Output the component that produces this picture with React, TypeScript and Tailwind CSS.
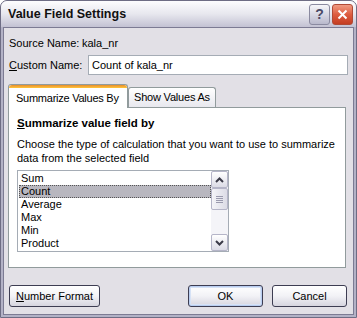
import React from "react";

const ui = { fontFamily: '"Liberation Sans", Arial, sans-serif' };

function XpButton({
  children,
  className = "",
  isDefault = false,
}: {
  children: React.ReactNode;
  className?: string;
  isDefault?: boolean;
}) {
  return (
    <button
      className={`flex h-[22px] items-center justify-center rounded-[3px] border border-[#3d3d52] bg-gradient-to-b from-[#ffffff] via-[#f2f2f6] to-[#d6d5df] text-[11px] text-black ${
        isDefault ? "shadow-[inset_0_0_0_1px_#b9cdf0,inset_0_0_0_2px_#d6e2f6]" : ""
      } ${className}`}
    >
      {children}
    </button>
  );
}

function ScrollBtn({ dir }: { dir: "up" | "down" }) {
  return (
    <div className="flex h-[17px] w-[17px] items-center justify-center rounded-[2px] border border-[#b5b5c8] bg-gradient-to-b from-[#ffffff] to-[#dcdce6]">
      <svg width="9" height="6" viewBox="0 0 9 6">
        <path
          d={dir === "up" ? "M1 5 L4.5 1.5 L8 5" : "M1 1 L4.5 4.5 L8 1"}
          fill="none"
          stroke="#3b3b48"
          strokeWidth="2"
        />
      </svg>
    </div>
  );
}

export default function App() {
  const items = ["Sum", "Count", "Average", "Max", "Min", "Product"];

  return (
    <div className="h-[318px] w-[357px] overflow-hidden bg-white" style={ui}>
      <div className="flex h-full flex-col rounded-t-[7px] border border-[#6e6d84] bg-[#b3b2c6]">
        {/* Title bar */}
        <div className="flex h-[26px] shrink-0 items-center rounded-t-[6px] bg-gradient-to-b from-[#fdfdfe] via-[#e7e7ee] to-[#c3c2d3] pl-[7px] pr-[3px]">
          <span className="flex-1 text-[12.5px] font-bold text-[#111]">
            Value Field Settings
          </span>
          <div className="flex h-[21px] w-[21px] items-center justify-center rounded-[3px] border border-[#8a8aa0] bg-gradient-to-b from-[#f6f6fa] to-[#b9b9cc] text-[14px] font-bold text-[#4a4a66]">
            ?
          </div>
          <div className="ml-[2px] flex h-[21px] w-[21px] items-center justify-center rounded-[3px] border border-[#b04a36] bg-gradient-to-b from-[#ef9a82] via-[#dd5c3f] to-[#c43d22]">
            <svg width="11" height="11" viewBox="0 0 11 11">
              <path d="M1.5 1.5 L9.5 9.5 M9.5 1.5 L1.5 9.5" stroke="#fff" strokeWidth="2" />
            </svg>
          </div>
        </div>

        {/* Body */}
        <div className="mx-[2px] mb-[2px] flex flex-1 flex-col border border-[#7c7b93] bg-[#e2e0e6] text-[11px] text-black">
          <div className="mt-[9px] flex h-[13px] items-center pl-[5px]">
            <span className="w-[73px]">Source Name:</span>
            <span>kala_nr</span>
          </div>

          <div className="mt-[5px] flex items-center pl-[5px] pr-[5px]">
            <span className="w-[79px]">
              <u>C</u>ustom Name:
            </span>
            <div className="flex h-[20px] flex-1 items-center border border-[#a5acb5] bg-white pl-[3px]">
              Count of kala_nr
            </div>
          </div>

          {/* Tabs */}
          <div className="mt-[9px] flex items-end pl-[4px]">
            <div className="relative z-10 -mb-px flex h-[24px] w-[120px] flex-col rounded-t-[3px] border border-b-0 border-[#919b9c] bg-white">
              <div className="h-[3px] rounded-t-[3px] bg-gradient-to-b from-[#e68b2c] to-[#ffc73c]" />
              <div className="flex flex-1 items-center pl-[7px] tracking-[-0.25px]">Summarize Values By</div>
            </div>
            <div className="flex h-[20px] w-[88px] items-center rounded-t-[3px] border border-b-0 border-[#919b9c] bg-gradient-to-b from-[#ffffff] to-[#e8e8ee] pl-[5px] tracking-[-0.2px]">
              Show Values As
            </div>
          </div>

          <div className="ml-[4px] mr-[7px] flex h-[161px] flex-col border border-[#919b9c] bg-white pl-[8px]">
            <div className="mt-[7px] text-[11.5px] font-bold">
              <u>S</u>ummarize value field by
            </div>
            <div className="mt-[5px] leading-[14px]">
              Choose the type of calculation that you want to use to summarize
              <br />
              data from the selected field
            </div>
            <div className="mt-[5px] flex h-[82px] w-[212px] border border-[#a5acb5] bg-white">
              <div className="flex-1 pl-[1px] pt-[1px]">
                {items.map((it) => (
                  <div
                    key={it}
                    className={`flex h-[13px] items-center pl-[1px] leading-[13px] ${
                      it === "Count" ? "border border-dotted border-[#555] bg-[#b8b7bf]" : "border border-transparent"
                    }`}
                  >
                    {it}
                  </div>
                ))}
              </div>
              <div className="flex w-[17px] flex-col bg-[#f4f4f8]">
                <ScrollBtn dir="up" />
                <div className="flex h-[22px] w-[17px] items-center justify-center rounded-[2px] border border-[#b5b5c8] bg-gradient-to-r from-[#f4f4f8] to-[#dcdce6]">
                  <svg width="7" height="8" viewBox="0 0 7 8">
                    <path d="M0 1.5 H7 M0 3.5 H7 M0 5.5 H7 M0 7.5 H7" stroke="#9a9aae" strokeWidth="1" />
                  </svg>
                </div>
                <div className="flex-1" />
                <ScrollBtn dir="down" />
              </div>
            </div>
          </div>

          {/* Buttons */}
          <div className="mt-[17px] flex items-center pl-[5px] pr-[6px]">
            <XpButton className="w-[91px]">
              <span>
                <u>N</u>umber Format
              </span>
            </XpButton>
            <div className="flex-1" />
            <XpButton className="w-[75px]" isDefault>
              OK
            </XpButton>
            <XpButton className="ml-[9px] w-[75px]">Cancel</XpButton>
          </div>
        </div>
      </div>
    </div>
  );
}
